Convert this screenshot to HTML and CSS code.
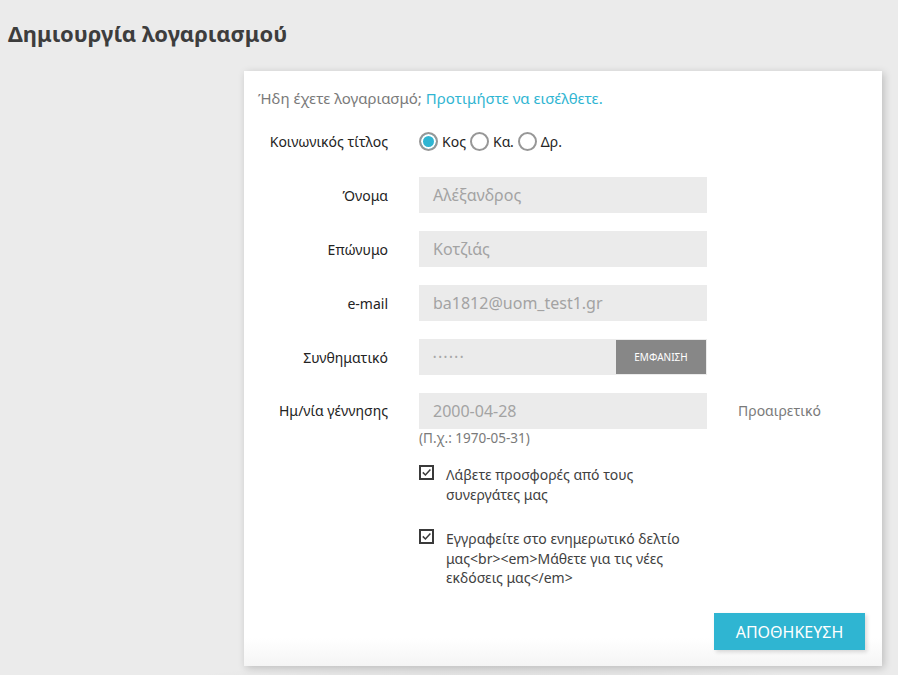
FILE: index.html
```html
<!DOCTYPE html>
<html lang="el">
<head>
<meta charset="utf-8">
<title>Δημιουργία λογαριασμού</title>
<link rel="stylesheet" href="styles.css">
</head>
<body>
<main class="page">
  <h1 class="page-title">Δημιουργία λογαριασμού</h1>
  <section class="card">
    <p class="intro">Ήδη έχετε λογαριασμό; <a href="#" class="link">Προτιμήστε να εισέλθετε.</a></p>
    <form class="form">
      <div class="row">
        <label class="label">Κοινωνικός τίτλος</label>
        <div class="radios">
          <label class="radio"><span class="radio-dot checked"></span>Κος</label>
          <label class="radio"><span class="radio-dot"></span>Κα.</label>
          <label class="radio"><span class="radio-dot"></span>Δρ.</label>
        </div>
      </div>
      <div class="row">
        <label class="label">Όνομα</label>
        <div class="input">Αλέξανδρος</div>
      </div>
      <div class="row">
        <label class="label">Επώνυμο</label>
        <div class="input">Κοτζιάς</div>
      </div>
      <div class="row">
        <label class="label">e-mail</label>
        <div class="input">ba1812@uom_test1.gr</div>
      </div>
      <div class="row">
        <label class="label">Συνθηματικό</label>
        <div class="input input-group"><span class="dots">••••••</span><button type="button" class="show-btn">ΕΜΦΑΝΙΣΗ</button></div>
      </div>
      <div class="row row-date">
        <label class="label">Ημ/νία γέννησης</label>
        <div class="date-col">
          <div class="input">2000-04-28</div>
          <div class="hint">(Π.χ.: 1970-05-31)</div>
        </div>
        <span class="comment">Προαιρετικό</span>
      </div>
      <div class="checks">
        <label class="check"><span class="box"><svg viewBox="0 0 15 15" width="15" height="15"><rect x="1" y="1" width="13" height="13" fill="none" stroke="#3a3a3a" stroke-width="2"/><path d="M3.8 7.4 L6.4 10 L11.4 4.4" fill="none" stroke="#3a3a3a" stroke-width="1.5"/></svg></span><span class="check-text">Λάβετε προσφορές από τους συνεργάτες μας</span></label>
        <label class="check"><span class="box"><svg viewBox="0 0 15 15" width="15" height="15"><rect x="1" y="1" width="13" height="13" fill="none" stroke="#3a3a3a" stroke-width="2"/><path d="M3.8 7.4 L6.4 10 L11.4 4.4" fill="none" stroke="#3a3a3a" stroke-width="1.5"/></svg></span><span class="check-text">Εγγραφείτε στο ενημερωτικό δελτίο μας&lt;br&gt;&lt;em&gt;Μάθετε για τις νέες εκδόσεις μας&lt;/em&gt;</span></label>
      </div>
      <footer class="form-footer">
        <button type="button" class="save">ΑΠΟΘΗΚΕΥΣΗ</button>
      </footer>
    </form>
  </section>
  <div class="floor-shadow"></div>
</main>
</body>
</html>
```

FILE: styles.css
```css
* { box-sizing: border-box; }
html, body { margin: 0; padding: 0; }
body {
  background: #ebebeb;
  font-family: "Noto Sans", "Open Sans", sans-serif;
  color: #232323;
  font-size: 14px;
  width: 898px;
  height: 675px;
  overflow: hidden;
}
.page {
  padding: 18px 0 0 8px;
  position: relative;
}
.page-title {
  margin: 0;
  font-size: 22px;
  line-height: 30px;
  font-weight: 700;
  color: #3d3d3d;
}
.card {
  margin: 23px 0 0 236px;
  width: 638px;
  height: 595px;
  background: #fff;
  box-shadow: 2px 2px 8px rgba(0,0,0,0.2);
  padding: 17px 0 0 14px;
  position: relative;
  z-index: 1;
}
.floor-shadow {
  position: absolute;
  left: 110px;
  top: 630px;
  width: 700px;
  height: 60px;
  background: radial-gradient(ellipse 50% 50% at 55% 100%, rgba(0,0,0,0.07), rgba(0,0,0,0) 100%);
  z-index: 0;
}
.intro {
  margin: 0;
  line-height: 20px;
  color: #7a7a7a;
  font-size: 15px;
}
.link { color: #2fb5d2; text-decoration: none; }
.form { margin-top: 15px; display: flex; flex-direction: column; }
.row {
  display: grid;
  grid-template-columns: 130px 288px auto;
  column-gap: 31px;
  align-items: center;
  margin-bottom: 18px;
}
.label {
  text-align: right;
  font-size: 14px;
  color: #232323;
}
.radios { display: flex; align-items: center; height: 36px; }
.radio { display: flex; align-items: center; margin-right: 4px; color: #232323; }
.radio-dot {
  width: 19px; height: 19px; border-radius: 50%;
  border: 2px solid #979797;
  margin-right: 4px;
  background: #fff;
}
.radio-dot.checked {
  background: #2fb5d2;
  box-shadow: inset 0 0 0 2px #fff;
}
.input {
  height: 36px;
  background: #ebebeb;
  color: #a3a3a3;
  font-size: 16px;
  line-height: 36px;
  padding-left: 14px;
}
.input-group { display: flex; align-items: center; justify-content: space-between; padding-right: 1px; }
.dots { font-size: 9px; color: #a8a8a8; letter-spacing: 2px; }
.show-btn {
  height: 34px; width: 90px;
  background: #878787; color: #fff; border: 0;
  font-family: "Noto Sans", sans-serif;
  font-size: 10px;
  padding: 0;
}
.row-date { align-items: start; margin-bottom: 0; }
.row-date .label, .row-date .comment { line-height: 36px; }
.comment { color: #7a7a7a; }
.hint { font-size: 13.5px; color: #7a7a7a; line-height: 19px; }
.checks { margin: 17px 0 0 161px; display: flex; flex-direction: column; gap: 25px; width: 280px; }
.check { display: flex; align-items: flex-start; color: #414141; line-height: 19.5px; }
.box { width: 15px; height: 15px; margin-right: 12px; flex: none; display: block; }
.box svg { display: block; }
.check-text { font-size: 14px; }
.form-footer {
  position: absolute;
  left: 0; right: 0; bottom: 0;
  height: 68px;
  background: linear-gradient(#fff 0, #fff 40px, #f5f5f5 68px);
  display: flex;
  justify-content: flex-end;
  align-items: flex-start;
  padding: 15px 17px 0 0;
}
.save {
  width: 151px; height: 37px;
  background: #2fb5d2; color: #fff; border: 0;
  font-family: "Noto Sans", sans-serif;
  font-size: 16px;
  box-shadow: 2px 2px 4px rgba(0,0,0,0.15);
}
```
